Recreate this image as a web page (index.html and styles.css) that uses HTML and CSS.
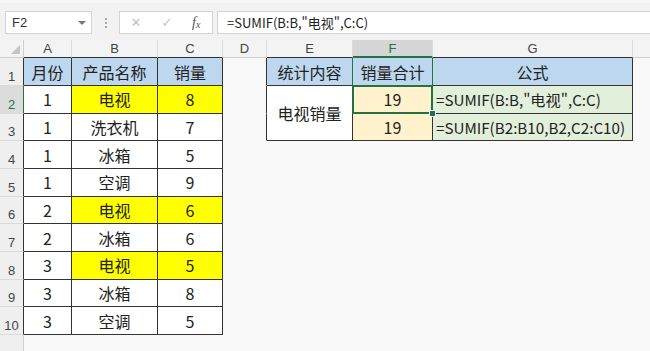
FILE: index.html
```html
<!DOCTYPE html>
<html lang="zh-CN">

<head>
    <meta charset="UTF-8">
    <title>SUMIF</title>
    <link rel="stylesheet" href="styles.css">
</head>

<body>

    <div class="toolbar">
        <div class="namebox">
            <span>F2</span>
            <span class="caret"></span>
        </div>
        <div class="grip"><i></i><i></i><i></i></div>
        <div class="fnbox">
            <span class="ic x">&#x2715;</span>
            <span class="ic ok">&#x2713;</span>
            <span class="ic fx">f<sub>x</sub></span>
        </div>
        <div class="formula">=SUMIF(B:B,"电视",C:C)</div>
    </div>

    <div class="sheet">
        <!-- en-têtes de colonnes -->
        <div class="ch corner"><span class="tri"></span></div>
        <div class="ch tb">A</div>
        <div class="ch tb">B</div>
        <div class="ch tb">C</div>
        <div class="ch">D</div>
        <div class="ch tb">E</div>
        <div class="ch tb sel">F</div>
        <div class="ch tb">G</div>
        <div class="ch last"></div>

        <!-- ligne 1 -->
        <div class="rh">1</div>
        <div class="c t hd">月份</div>
        <div class="c t hd">产品名称</div>
        <div class="c t hd">销量</div>
        <div class="c dr"></div>
        <div class="c t hd gr-r">统计内容</div>
        <div class="c t hd gr-r">销量合计</div>
        <div class="c t hd">公式</div>
        <div class="c"></div>

        <!-- ligne 2 -->
        <div class="rh sel">2</div>
        <div class="c t">1</div>
        <div class="c t y">电视</div>
        <div class="c t y">8</div>
        <div class="c dr"></div>
        <div class="c t merged">电视销量</div>
        <div class="c t cr active">19</div>
        <div class="c t gn l">=SUMIF(B:B,"电视",C:C)</div>
        <div class="c"></div>

        <!-- ligne 3 -->
        <div class="rh">3</div>
        <div class="c t">1</div>
        <div class="c t">洗衣机</div>
        <div class="c t">7</div>
        <div class="c dr"></div>
        <div class="c t cr">19</div>
        <div class="c t gn l">=SUMIF(B2:B10,B2,C2:C10)</div>
        <div class="c"></div>

        <div class="rh">4</div>
        <div class="c t">1</div>
        <div class="c t">冰箱</div>
        <div class="c t">5</div>
        <div class="c rest"></div>

        <div class="rh">5</div>
        <div class="c t">1</div>
        <div class="c t">空调</div>
        <div class="c t">9</div>
        <div class="c rest"></div>

        <div class="rh">6</div>
        <div class="c t">2</div>
        <div class="c t y">电视</div>
        <div class="c t y">6</div>
        <div class="c rest"></div>

        <div class="rh">7</div>
        <div class="c t">2</div>
        <div class="c t">冰箱</div>
        <div class="c t">6</div>
        <div class="c rest"></div>

        <div class="rh">8</div>
        <div class="c t">3</div>
        <div class="c t y">电视</div>
        <div class="c t y">5</div>
        <div class="c rest"></div>

        <div class="rh">9</div>
        <div class="c t">3</div>
        <div class="c t">冰箱</div>
        <div class="c t">8</div>
        <div class="c rest"></div>

        <div class="rh">10</div>
        <div class="c t">3</div>
        <div class="c t">空调</div>
        <div class="c t">5</div>
        <div class="c rest"></div>

        <div class="rh empty"></div>
        <div class="c all"></div>
    </div>

</body>

</html>
```

FILE: styles.css
```css
body {
    margin: 0;
    width: 650px;
    height: 351px;
    overflow: hidden;
    background-color: #f9f9f9;
    font-family: 'Noto Sans CJK SC', 'Liberation Sans', sans-serif;
    color: #222;
}

/* Barre de formule */
.toolbar {
    display: flex;
    align-items: flex-start;
    height: 40px;
    padding: 11px 0 0 5px;
    box-sizing: border-box;
    background-color: #f2f2f2;
    border-top: 3px solid #f7f7f7;
}

.namebox {
    width: 87px;
    height: 23px;
    box-sizing: border-box;
    margin-top: -3px;
    border: 1px solid #d4d4d4;
    background-color: #fff;
    display: flex;
    align-items: center;
    justify-content: space-between;
    padding: 0 5px 0 6px;
    font-family: 'Liberation Sans', sans-serif;
    font-size: 13px;
    color: #333;
}

.caret {
    width: 0;
    height: 0;
    border-left: 4px solid transparent;
    border-right: 4px solid transparent;
    border-top: 4px solid #777;
}

.grip {
    width: 27px;
    height: 23px;
    margin-top: -3px;
    display: flex;
    flex-direction: column;
    align-items: center;
    justify-content: center;
    gap: 2px;
}

.grip i {
    width: 2px;
    height: 2px;
    background-color: #a8a8a8;
}

.fnbox {
    width: 94px;
    height: 23px;
    box-sizing: border-box;
    margin-top: -3px;
    border: 1px solid #d4d4d4;
    background-color: #fff;
    display: flex;
    align-items: center;
    padding-left: 10px;
}

.ic {
    display: inline-block;
    text-align: center;
    font-family: 'DejaVu Sans', sans-serif;
    font-size: 13px;
    color: #c2c2c2;
}

.ic.x {
    width: 12px;
}

.ic.ok {
    width: 12px;
    margin-left: 19px;
}

.ic.fx {
    margin-left: 19px;
    font-family: 'Liberation Serif', serif;
    font-style: italic;
    font-size: 14px;
    color: #555;
}

.ic.fx sub {
    font-size: 10px;
    vertical-align: -1px;
}

.formula {
    flex: 1;
    height: 23px;
    box-sizing: border-box;
    margin: -3px 0 0 4px;
    border: 1px solid #d4d4d4;
    border-right: none;
    background-color: #fff;
    padding-left: 9px;
    line-height: 21px;
    font-size: 13px;
    color: #222;
}

/* Feuille */
.sheet {
    display: grid;
    grid-template-columns: 24px 48px 86px 65px 44px 86px 80px 200px 1fr;
    grid-template-rows: 18.4px repeat(10, 27.67px) 1fr;
    height: 311px;
}

.ch {
    background-color: #f3f3f3;
    border-right: 1px solid #dcdcdc;
    border-bottom: 1px solid #cfcfcf;
    font-size: 13px;
    color: #444;
    text-align: center;
    line-height: 18px;
    font-family: 'Liberation Sans', sans-serif;
}

.ch.tb {
    border-bottom-color: #333;
}

.ch.sel {
    background-color: #d6d6d6;
    color: #217346;
    border-bottom: 2px solid #217346;
    line-height: 17px;
}

.ch.last {
    border-right: none;
}

.corner {
    position: relative;
    border-right-color: #cfcfcf;
}

.tri {
    position: absolute;
    right: 3px;
    bottom: 3px;
    width: 0;
    height: 0;
    border-left: 9px solid transparent;
    border-bottom: 9px solid #c4c4c4;
}

.rh {
    background-color: #efefef;
    border-right: 1px solid #333;
    border-bottom: 1px solid #dadada;
    font-family: 'Liberation Sans', sans-serif;
    font-size: 13px;
    color: #444;
    display: flex;
    align-items: flex-end;
    justify-content: center;
    padding-bottom: 1px;
}

.rh.sel {
    background-color: #dcdcdc;
    color: #217346;
    border-right-color: #217346;
}

.rh.empty {
    border-right-color: #cfcfcf;
    border-bottom: none;
}

.c {
    display: flex;
    align-items: center;
    justify-content: center;
    font-size: 16px;
    border-right: 1px solid transparent;
    border-bottom: 1px solid transparent;
}

.c.t {
    background-color: #fff;
    border-right-color: #333;
    border-bottom-color: #333;
}

.c.dr {
    border-right-color: #333;
}

.c.rest {
    grid-column: 5 / -1;
}

.c.all {
    grid-column: 2 / -1;
}

.c.merged {
    grid-row: span 2;
}

.c.gr-r {
    border-right-color: #217346;
}

.c.l {
    justify-content: flex-start;
    padding-left: 3px;
    font-size: 15.2px;
}

/* Couleurs de remplissage */
.hd {
    background-color: #bdd7ee !important;
}

.y {
    background-color: #ffff00 !important;
}

.cr {
    background-color: #fff2cc !important;
}

.gn {
    background-color: #e2efda !important;
}

/* Cellule active */
.active {
    position: relative;
}

.active::after {
    content: '';
    position: absolute;
    top: -1px;
    left: -1px;
    right: -1px;
    bottom: -1px;
    border: 2px solid #217346;
}

.active::before {
    content: '';
    position: absolute;
    right: -4px;
    bottom: -4px;
    width: 5px;
    height: 5px;
    background-color: #217346;
    border: 1px solid #fff;
    z-index: 1;
}
```
